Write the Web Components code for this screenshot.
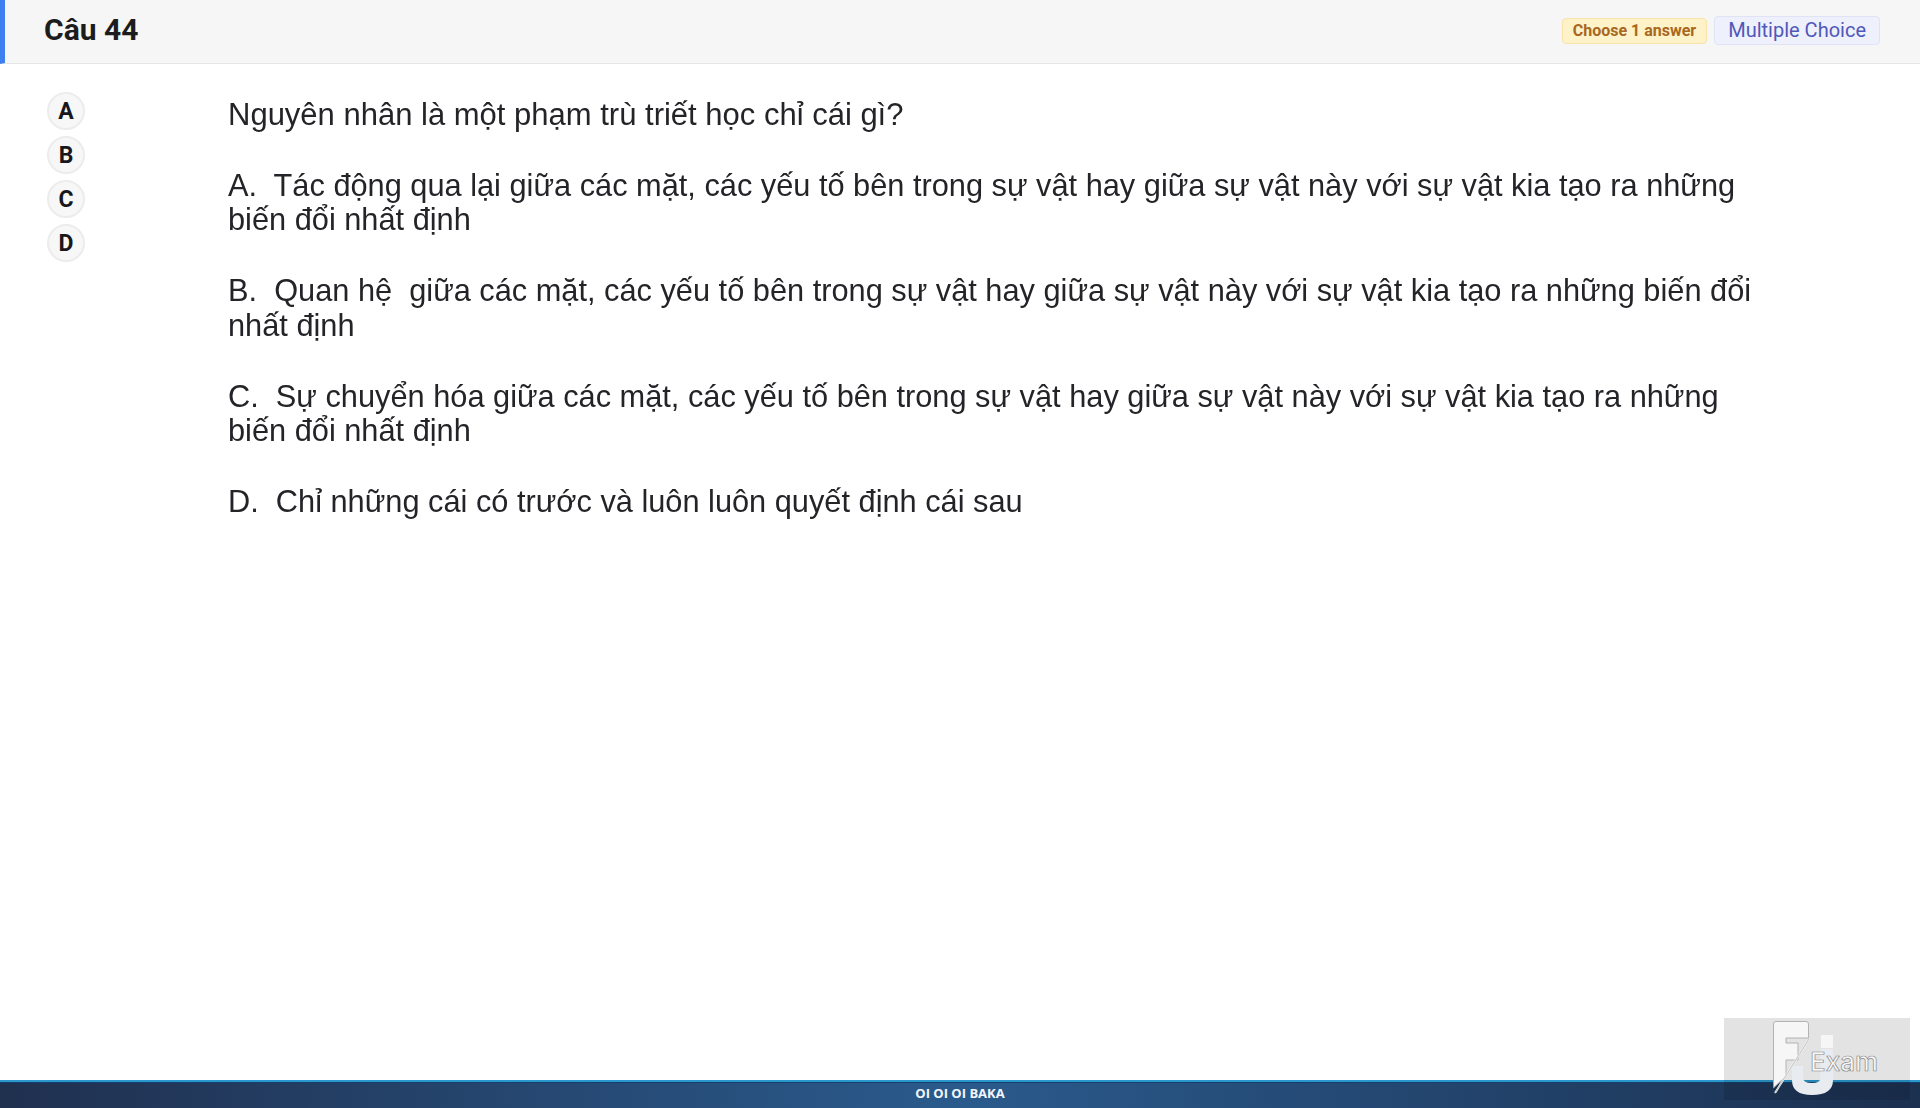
<!DOCTYPE html>
<html lang="vi">
<head>
<meta charset="utf-8">
<title>Câu 44</title>
<style>
  html, body { margin: 0; height: 100%; background: #fff; }
  body { font-family: Roboto, "Liberation Sans", sans-serif; overflow: hidden; }
  exam-page { height: 1108px; }
</style>
</head>
<body>
<exam-page>
  <exam-header slot="header" title-text="Câu 44">
    <exam-pill kind="count">Choose 1 answer</exam-pill>
    <exam-pill kind="type">Multiple Choice</exam-pill>
  </exam-header>
  <answer-list slot="answers">
    <answer-choice>A</answer-choice>
    <answer-choice>B</answer-choice>
    <answer-choice>C</answer-choice>
    <answer-choice>D</answer-choice>
  </answer-list>
  <question-body slot="question">
    <p class="stem">Nguyên nhân là một phạm trù triết học chỉ cái gì?</p>
    <p>A.  Tác động qua lại giữa các mặt, các yếu tố bên trong sự vật hay giữa sự vật này với sự vật kia tạo ra những<br>biến đổi nhất định</p>
    <p>B.  Quan hệ  giữa các mặt, các yếu tố bên trong sự vật hay giữa sự vật này với sự vật kia tạo ra những biến đổi<br>nhất định</p>
    <p>C.  Sự chuyển hóa giữa các mặt, các yếu tố bên trong sự vật hay giữa sự vật này với sự vật kia tạo ra những<br>biến đổi nhất định</p>
    <p>D.  Chỉ những cái có trước và luôn luôn quyết định cái sau</p>
  </question-body>
  <exam-footer slot="footer">OI OI OI BAKA</exam-footer>
  <exam-logo slot="logo"></exam-logo>
</exam-page>

<script>
class ExamPage extends HTMLElement {
  constructor() {
    super();
    this.attachShadow({ mode: 'open' }).innerHTML = `
      <style>
        :host { display: flex; flex-direction: column; position: relative; overflow: hidden; }
        #main { flex: 1; display: flex; min-height: 0; }
      </style>
      <slot name="header"></slot>
      <div id="main">
        <slot name="answers"></slot>
        <slot name="question"></slot>
      </div>
      <slot name="footer"></slot>
      <slot name="logo"></slot>`;
  }
}

class ExamHeader extends HTMLElement {
  constructor() {
    super();
    this.attachShadow({ mode: 'open' }).innerHTML = `
      <style>
        :host {
          display: flex; align-items: center; justify-content: space-between;
          box-sizing: border-box; height: 64px; flex: none;
          padding: 0 40px 2px 39px;
          background: #f6f6f6;
          border-left: 5px solid #3f80f0;
          border-bottom: 1px solid #e6e6e6;
        }
        h1 { margin: 0 0 2px; font: 700 30px/1 Roboto, sans-serif; color: #1c1c1e; }
        #pills { display: flex; align-items: center; gap: 7px; }
      </style>
      <h1></h1>
      <div id="pills"><slot></slot></div>`;
    this.shadowRoot.querySelector('h1').textContent = this.getAttribute('title-text');
  }
}

class ExamPill extends HTMLElement {
  constructor() {
    super();
    this.attachShadow({ mode: 'open' }).innerHTML = `
      <style>
        :host {
          display: block; box-sizing: border-box; border-radius: 4px; white-space: nowrap;
          font-family: Roboto, sans-serif;
        }
        :host([kind="count"]) {
          padding: 0 10px; height: 26px; line-height: 24px;
          font-size: 16px; font-weight: 700; color: #a8681f;
          background: #fdf2c8; border: 1px solid #f8e3a8;
        }
        :host([kind="type"]) {
          padding: 0 13px; height: 29px; line-height: 27px;
          font-size: 20px; font-weight: 400; color: #5058b8;
          background: #eef0fc; border: 1px solid #dfe3f5;
        }
      </style>
      <slot></slot>`;
  }
}

class AnswerList extends HTMLElement {
  constructor() {
    super();
    this.attachShadow({ mode: 'open' }).innerHTML = `
      <style>
        :host {
          display: flex; flex-direction: column; gap: 6px; flex: none;
          box-sizing: border-box; width: 228px; padding: 28px 0 0 47px;
        }
      </style>
      <slot></slot>`;
  }
}

class AnswerChoice extends HTMLElement {
  constructor() {
    super();
    this.attachShadow({ mode: 'open' }).innerHTML = `
      <style>
        :host {
          display: flex; align-items: center; justify-content: center;
          box-sizing: border-box; width: 38px; height: 38px; border-radius: 50%;
          background: #f7f7f7; border: 2px solid #ececec;
          font: 700 23px/1 Roboto, sans-serif; color: #17171c;
        }
      </style>
      <slot></slot>`;
  }
}

class QuestionBody extends HTMLElement {
  constructor() {
    super();
    this.attachShadow({ mode: 'open' }).innerHTML = `
      <style>
        :host {
          display: block; flex: 1; padding-top: 34px;
          font: 400 30.75px/34.7px "Liberation Sans", Arial, sans-serif;
          color: #242428; filter: blur(0.4px);
        }
        ::slotted(p) { margin: 0 0 36px; white-space: pre; }
        ::slotted(.stem) { font-size: 31px; }
      </style>
      <slot></slot>`;
  }
}

class ExamFooter extends HTMLElement {
  constructor() {
    super();
    this.attachShadow({ mode: 'open' }).innerHTML = `
      <style>
        :host {
          display: block; flex: none; box-sizing: border-box; height: 28px;
          border-top: 2px solid #2a98cc;
          box-shadow: inset 0 1px 0 #14406f;
          background: linear-gradient(90deg, #20304f 0%, #2a5a8c 50%, #1c3050 100%);
          color: #f2f6fa; text-align: center;
          font: 700 13px/23px "Open Sans", "Liberation Sans", sans-serif;
        }
      </style>
      <slot></slot>`;
  }
}

class ExamLogo extends HTMLElement {
  constructor() {
    super();
    this.attachShadow({ mode: 'open' }).innerHTML = `
      <style>
        :host {
          position: absolute; right: 10px; bottom: 8px;
          display: block; width: 186px; height: 82px;
          background: rgba(0, 0, 0, 0.11);
        }
        svg { display: block; width: 186px; height: 82px; }
        text {
          font: 500 26px Inter, Roboto, sans-serif; fill: #f8f8f8;
          stroke: #8a8a8a; stroke-width: 0.7;
        }
      </style>
      <svg viewBox="0 0 186 82" aria-hidden="true">
        <path d="M49.5 6Q49.5 3.5 52 3.5H82Q84.5 3.5 84.5 6V20H62V25H74V42H62V58L49.5 70Z" fill="#f6f6f6" stroke="#a4a4a4" stroke-width="0.8"/>
        <path d="M85 21L51 75" stroke="#f4f4f4" stroke-width="2" fill="none"/>
        <path d="M85 21L51 75" stroke="#a0a0a0" stroke-width="0.6" fill="none"/>
        <path d="M68 48H79V60Q79 65 88 65Q96.5 65 96.5 60V31H109V62Q109 77 88 77Q68 77 68 62Z" fill="#e8ecf1"/>
        <rect x="97" y="17" width="12" height="13" fill="#f6f6f6"/>
        <text x="86" y="53">Exam</text>
      </svg>`;
  }
}

customElements.define('exam-page', ExamPage);
customElements.define('exam-header', ExamHeader);
customElements.define('exam-pill', ExamPill);
customElements.define('answer-list', AnswerList);
customElements.define('answer-choice', AnswerChoice);
customElements.define('question-body', QuestionBody);
customElements.define('exam-footer', ExamFooter);
customElements.define('exam-logo', ExamLogo);
</script>
</body>
</html>
